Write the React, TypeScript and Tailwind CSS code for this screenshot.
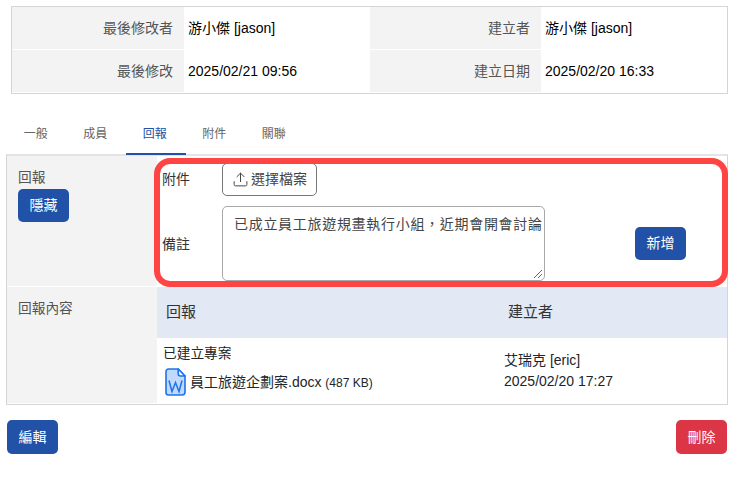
import { Upload } from 'lucide-react';

const FONT = "font-['Liberation_Sans','Noto_Sans_CJK_TC',sans-serif]";

function InfoRow({ cells, bottom }: { cells: string[][]; bottom?: boolean }) {
  return (
    <div className={`grid grid-cols-[172px_186px_171px_186px] h-[42px] ${bottom ? '' : 'mb-px'}`}>
      {cells.map(([label, value]) => (
        <div key={label} className="contents">
          <div className="bg-[#f3f3f3] flex items-center justify-end pr-[11px] text-[14px] text-[#555]">{label}</div>
          <div className="bg-white flex items-center pl-[4px] text-[14px] text-black">{value}</div>
        </div>
      ))}
    </div>
  );
}

function Button({ label, red, short }: { label: string; red?: boolean; short?: boolean }) {
  return (
    <button className={`w-[51px] rounded-[5px] text-white text-[14px] flex items-center justify-center ${short ? 'h-[33px]' : 'h-[34px]'} ${red ? 'bg-[#dc3545]' : 'bg-[#2152a8]'}`}>
      {label}
    </button>
  );
}

function WordIcon() {
  return (
    <svg width="21" height="28" viewBox="0 0 21 28" className="shrink-0">
      <path d="M3.5 1h9.7L20 8v16a3 3 0 0 1-3 3H3.5a2.5 2.5 0 0 1-2.5-2.5v-21A2.5 2.5 0 0 1 3.5 1z" fill="#c2d9fb" stroke="#1a73f0" strokeWidth="1.6" />
      <path d="M13.2 1v4.6A2.4 2.4 0 0 0 15.6 8H20z" fill="#fff" stroke="#1a73f0" strokeWidth="1.6" strokeLinejoin="round" />
      <path d="M4 12.5l3 11 3.5-9 3.5 9 3-11" fill="none" stroke="#1a73f0" strokeWidth="1.5" />
    </svg>
  );
}

export default function App() {
  const tabs = ['一般', '成員', '回報', '附件', '關聯'];

  return (
    <div className={`${FONT} relative w-[735px] h-[480px] bg-white overflow-hidden text-[#212529]`}>
      {/* Info table */}
      <div className="ml-[11px] mt-[6px] w-[717px] border border-[#d5d5d5] pb-px">
        <InfoRow cells={[['最後修改者', '游小傑 [jason]'], ['建立者', '游小傑 [jason]']]} />
        <InfoRow bottom cells={[['最後修改', '2025/02/21 09:56'], ['建立日期', '2025/02/20 16:33']]} />
      </div>

      {/* Tabs */}
      <div className="flex ml-[6px] mt-[19px] h-[42px]">
        {tabs.map((t) => (
          <div
            key={t}
            className={`relative w-[59.5px] flex items-center justify-center text-[12px] ${t === '回報' ? 'text-[#2152a8]' : 'text-[#666]'}`}
          >
            {t}
            {t === '回報' && <span className="absolute left-px bottom-0 w-[60px] h-[2px] bg-[#2152a8] z-10" />}
          </div>
        ))}
      </div>

      {/* Panel */}
      <div className="ml-[6px] -mt-[1px] w-[722px] border border-[#d5d5d5] border-t-2 border-t-[#e4e4e4]">
        <div className="grid grid-cols-[150px_1fr] h-[131px] border-b border-white">
          <div className="bg-[#f3f3f3] pl-[11px] pt-[12px] text-[13.7px] text-[#555]">
            <div className="h-[21px] leading-[20px]">回報</div>
            <Button label="隱藏" short />
          </div>
          <div className="bg-white flex">
            <div className="w-[65px] pl-[5px] text-[14px] text-[#333]">
              <div className="pt-[13px]">附件</div>
              <div className="pt-[44px]">備註</div>
            </div>
            <div className="w-[323px] pt-[7px]">
              <button className="w-[95px] h-[33px] border border-[#777] rounded-[5px] flex items-center justify-center gap-[2px] text-[14px] text-[#444] bg-white">
                <Upload size={17} strokeWidth={1.4} />
                選擇檔案
              </button>
              <div className="mt-[10px] w-[323px] h-[75px] border border-[#a8a8a8] rounded-[5px] pl-[11px] pt-[7px] text-[14px] tracking-[0.7px] text-[#444] relative">
                已成立員工旅遊規畫執行小組，近期會開會討論
                <svg width="10" height="10" viewBox="0 0 10 10" className="absolute right-px bottom-px">
                  <path d="M1 9L9 1M5 9L9 5" stroke="#666" strokeWidth="1" />
                </svg>
              </div>
            </div>
            <div className="ml-[90px] pt-[71px]">
              <Button label="新增" short />
            </div>
          </div>
        </div>

        <div className="grid grid-cols-[150px_1fr] h-[117px] border-b border-white">
          <div className="bg-[#f3f3f3] pl-[11px] pt-[12px] text-[13.7px] text-[#555]">回報內容</div>
          <div className="bg-white">
            <div className="h-[51px] bg-[#e2e8f4] flex items-center text-[15px] text-[#333]">
              <div className="w-[342px] pl-[9px]">回報</div>
              <div className="pl-[9px]">建立者</div>
            </div>
            <div className="flex text-[14px] text-[#212529]">
              <div className="w-[347px] pl-[6px] pt-[6px]">
                <div className="h-[20px] leading-[20px] text-[13.7px]">已建立專案</div>
                <div className="flex items-center gap-[4px] pl-[2px] h-[30px] mt-[3px]">
                  <WordIcon />
                  <span className="text-[14px]">員工旅遊企劃案.docx <span className="text-[12px]">(487 KB)</span></span>
                </div>
              </div>
              <div className="pt-[12px] leading-[21px] text-[14px]">
                <div>艾瑞克 [eric]</div>
                <div>2025/02/20 17:27</div>
              </div>
            </div>
          </div>
        </div>
      </div>

      {/* Footer */}
      <div className="flex justify-between ml-[7px] mr-[8px] mt-[15px]">
        <Button label="編輯" />
        <Button label="刪除" red />
      </div>

      {/* Annotation */}
      <div className="absolute left-[154px] top-[158px] w-[574px] h-[129px] border-[6px] border-[#ff4444] rounded-[16px] pointer-events-none" />
    </div>
  );
}
